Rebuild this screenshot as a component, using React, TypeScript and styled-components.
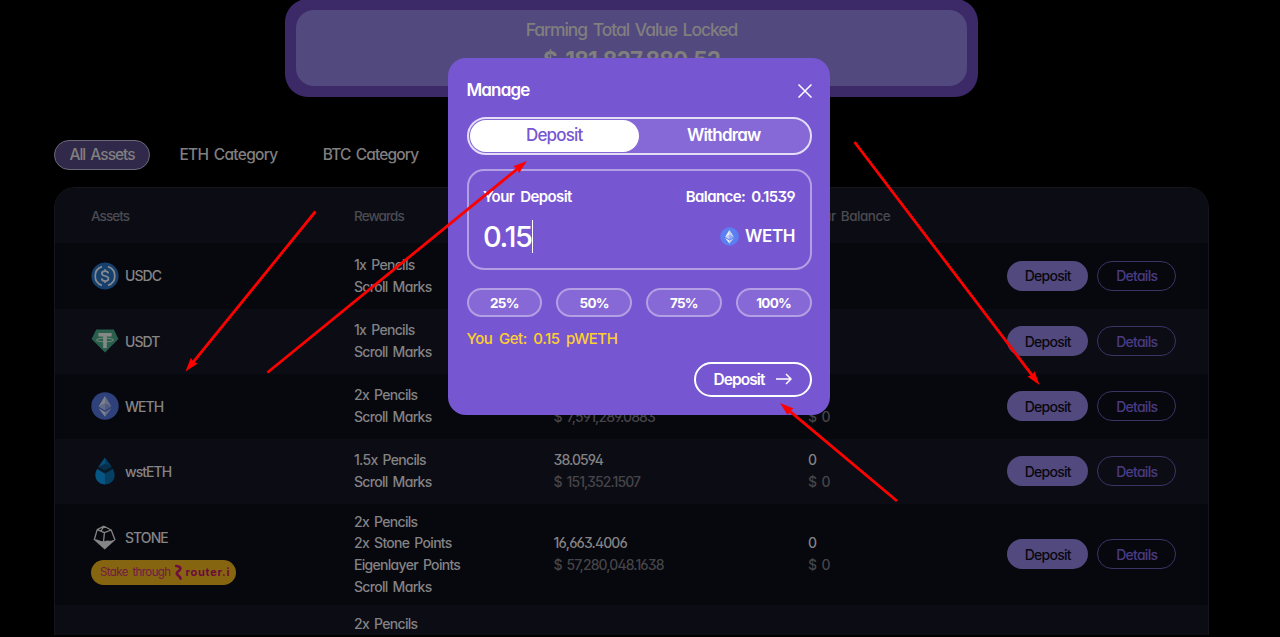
import styled, { createGlobalStyle } from "styled-components";

const GlobalStyle = createGlobalStyle`
  * {
    box-sizing: border-box;
  }
  body {
    margin: 0;
    background: #000;
    font-family: Inter, "Open Sans", sans-serif;
    font-feature-settings: "cv11", "ss01";
    font-weight: 550;
    word-spacing: 2px;
    overflow: hidden;
  }
  button {
    font: inherit;
    word-spacing: inherit;
    padding: 0;
    cursor: pointer;
  }
`;

const Page = styled.div`
  position: relative;
  height: 637px;
  overflow: hidden;
  display: flex;
  flex-direction: column;
  background: #000;
`;

const Banner = styled.section`
  flex: none;
  width: 693px;
  height: 98px;
  margin: -1px 0 0 285px;
  padding: 11px;
  border-radius: 23px;
  background: #3c2a68;
`;

const BannerInner = styled.div`
  height: 76px;
  border-radius: 18px;
  background: #52497e;
  color: #807f7e;
  text-align: center;
  padding-top: 8px;
`;

const BannerTitle = styled.div`
  font-size: 17.5px;
  line-height: 24px;
  letter-spacing: -1.05px;
`;

const BannerValue = styled.div`
  margin-top: 4px;
  font-size: 22.5px;
  line-height: 28px;
  font-weight: 650;
  letter-spacing: -0.85px;
  word-spacing: 4px;
`;

const Tabs = styled.nav`
  flex: none;
  display: flex;
  margin: 43px 0 0 54px;
  height: 30px;
`;

const Tab = styled.button<{ $active?: boolean; $width: number; $spacing: number }>`
  width: ${(p) => p.$width}px;
  height: 30px;
  border-radius: 15px;
  border: 1px solid ${(p) => (p.$active ? "#6b6878" : "transparent")};
  background: ${(p) => (p.$active ? "#302949" : "transparent")};
  color: #807f80;
  font-size: 15.5px;
  line-height: 26px;
  padding-bottom: 1px;
  letter-spacing: ${(p) => p.$spacing}px;
  white-space: nowrap;
`;

const Table = styled.section`
  flex: none;
  width: 1155px;
  height: 448px;
  margin: 17px 0 0 54px;
  border: 1px solid #15151c;
  border-bottom: 0;
  border-radius: 21px 21px 0 0;
  overflow: hidden;
  background: #0c0c15;
`;

const TableRow = styled.div<{ $height: number; $dark?: boolean }>`
  display: grid;
  grid-template-columns: 263px 199.5px 254.5px 199px 169px;
  align-items: center;
  height: ${(p) => p.$height}px;
  padding-left: 36px;
  background: ${(p) => (p.$dark ? "#07070e" : "#0c0c15")};
`;

const HeadCell = styled.div<{ $spacing: number }>`
  padding-top: 1px;
  color: #4b4b50;
  font-size: 13.5px;
  letter-spacing: ${(p) => p.$spacing}px;
`;

const Lines = styled.div<{ $spacing?: number; $lift?: number }>`
  display: flex;
  flex-direction: column;
  margin-bottom: ${(p) => p.$lift ?? 0}px;
  color: #838383;
  font-size: 14px;
  line-height: 21.8px;
  letter-spacing: ${(p) => p.$spacing ?? -0.7}px;
  white-space: nowrap;
`;

const Muted = styled.span`
  color: #454548;
`;

const Asset = styled.div`
  display: flex;
  align-items: center;
  gap: 6px;
  height: 28px;
  color: #858585;
  font-size: 14px;
  letter-spacing: -0.95px;

  svg {
    flex: none;
  }
`;

const StakeBadge = styled.div`
  display: flex;
  align-items: center;
  width: 145px;
  height: 25px;
  margin-top: 8px;
  padding-left: 9px;
  border-radius: 13px;
  background: #85650f;
  color: #741a43;
  font-size: 11.5px;
  font-weight: 400;
  letter-spacing: -0.6px;
  white-space: nowrap;

  svg {
    flex: none;
    margin: 0 2px 0 3px;
  }
`;

const Router = styled.b`
  font-size: 11px;
  font-weight: 700;
  letter-spacing: 0.75px;
  color: #6c0a3c;
`;

const Actions = styled.div`
  display: flex;
  gap: 9px;
`;

const ActionButton = styled.button<{ $filled?: boolean }>`
  width: ${(p) => (p.$filled ? 82 : 79)}px;
  height: 30px;
  border-radius: 15px;
  border: ${(p) => (p.$filled ? "0" : "1px solid #3d3365")};
  background: ${(p) => (p.$filled ? "#52497e" : "transparent")};
  color: ${(p) => (p.$filled ? "#08070f" : "#4a3b82")};
  font-size: 14px;
  font-weight: ${(p) => (p.$filled ? 450 : 550)};
  letter-spacing: -0.75px;
`;

const Modal = styled.section`
  position: absolute;
  top: 58px;
  left: 448px;
  width: 382px;
  height: 357px;
  padding: 0 18.5px 0 18.5px;
  border-radius: 18px;
  background: #7756d1;
  color: #fff;
`;

const ModalHeader = styled.header`
  display: flex;
  justify-content: space-between;
  align-items: center;
  height: 59px;
  padding-top: 6px;
`;

const ModalTitle = styled.h2`
  margin: 0 0 2px;
  font-size: 17px;
  font-weight: 600;
  letter-spacing: -0.85px;
`;

const Toggle = styled.div`
  display: flex;
  height: 38px;
  padding: 1px;
  border: 2px solid #e4ddf6;
  border-radius: 19px;
  background: #8669d6;
`;

const ToggleItem = styled.button<{ $active?: boolean }>`
  flex: 1;
  border: 0;
  border-radius: 16px;
  background: ${(p) => (p.$active ? "#fff" : "transparent")};
  color: ${(p) => (p.$active ? "#7756d1" : "#fff")};
  font-size: 17px;
  line-height: 28px;
  padding-bottom: 3px;
  font-weight: ${(p) => (p.$active ? 450 : 600)};
  letter-spacing: -0.8px;
`;

const DepositBox = styled.div`
  height: 101px;
  margin-top: 14px;
  padding: 15px 14.5px 0 14.5px;
  border: 2px solid #b39fe4;
  border-radius: 17px;
`;

const Split = styled.div<{ $height: number }>`
  display: flex;
  justify-content: space-between;
  align-items: center;
  height: ${(p) => p.$height}px;
  font-size: 15px;
  font-weight: 600;
  letter-spacing: -0.6px;
  word-spacing: 3px;
`;

const Amount = styled.div`
  height: 33px;
  border-right: 1px solid #fff;
  font-size: 29px;
  line-height: 33px;
  font-weight: 550;
  letter-spacing: -1.4px;
`;

const Token = styled.div`
  display: flex;
  align-items: center;
  gap: 6px;
  font-size: 17px;
  letter-spacing: -0.4px;
`;

const Percents = styled.div`
  display: grid;
  grid-template-columns: repeat(4, 1fr);
  gap: 14px;
  margin-top: 18px;
`;

const Percent = styled.button`
  height: 29px;
  border: 2px solid #b39fe4;
  border-radius: 15px;
  background: #8669d6;
  color: #fff;
  font-size: 13.5px;
  font-weight: 650;
  letter-spacing: -0.75px;
`;

const YouGet = styled.div`
  margin-top: 12px;
  height: 20px;
  line-height: 20px;
  font-size: 15px;
  letter-spacing: -0.45px;
  word-spacing: 3px;
  color: #ffd02d;
`;

const ModalFooter = styled.footer`
  display: flex;
  justify-content: flex-end;
  margin-top: 13px;
`;

const SubmitButton = styled.button`
  display: flex;
  align-items: center;
  justify-content: center;
  gap: 11px;
  width: 118px;
  height: 35px;
  padding-bottom: 1px;
  border: 2px solid #fff;
  border-radius: 18px;
  background: transparent;
  color: #fff;
  font-size: 15.5px;
  font-weight: 600;
  letter-spacing: -0.9px;
`;

const Arrows = styled.svg`
  position: absolute;
  inset: 0;
  pointer-events: none;
`;

const UsdcIcon = () => (
  <svg width="28" height="28" viewBox="0 0 28 28">
    <circle cx="14" cy="14" r="13.6" fill="#153f6c" />
    <g fill="none" stroke="#86898d" strokeWidth="1.7">
      <path d="M11 4.6a9.9 9.9 0 0 0 0 18.8M17 4.6a9.9 9.9 0 0 1 0 18.8" />
      <path d="M17.3 11.4c-.2-1.5-1.4-2.3-3.2-2.3-2 0-3.3.9-3.3 2.4 0 3.5 6.7 1.5 6.7 5 0 1.6-1.4 2.5-3.4 2.5s-3.4-.9-3.5-2.6M14 7.2v2M14 18.9v2.2" />
    </g>
  </svg>
);

const UsdtIcon = () => (
  <svg width="28" height="28" viewBox="0 0 28 28">
    <path d="M5.2 2.4h17.6l4.6 9.6L14 25.4.6 12z" fill="#28604d" />
    <path d="M7.4 6h13.2v3.4h-4.8V21h-3.6V9.4H7.4z" fill="#858986" />
    <ellipse cx="14" cy="13" rx="8.6" ry="1.8" fill="none" stroke="#858986" strokeWidth=".9" />
  </svg>
);

const EthIcon = ({ size, bright }: { size: number; bright?: boolean }) => (
  <svg width={size} height={size} viewBox="0 0 28 28">
    <circle cx="14" cy="14" r="13.7" fill={bright ? "#5b7ff0" : "#2f417b"} />
    <g fill={bright ? "#fff" : "#87898e"}>
      <path d="M14 4v7.6l-6.5 3z" opacity=".9" />
      <path d="M14 4l6.5 10.6-6.5-3z" opacity=".65" />
      <path d="M14 11.6v7l-6.5-4z" opacity=".6" />
      <path d="M14 11.6l6.5 3-6.5 4z" opacity=".35" />
      <path d="M14 20v4.7l-6.5-8.5z" opacity=".9" />
      <path d="M14 20l6.5-3.8-6.5 8.5z" opacity=".6" />
    </g>
  </svg>
);

const WstEthIcon = () => (
  <svg width="28" height="28" viewBox="0 0 28 28">
    <path d="M14 .5v12.9L7.300 9.800z" fill="#07507c" />
    <path d="M14 .5l6.700 9.300-6.700 3.600z" fill="#063a5d" />
    <path d="M7.300 9.800L14 6.700l6.700 3.100-6.700 3.700z" fill="#07304c" />
    <path d="M6.200 11.800L14 16.500v11C6 27.500 1.600 19.500 6.200 11.800z" fill="#075582" />
    <path d="M21.800 11.800L14 16.500v11c8 0 12.400-8 7.800-15.700z" fill="#063f62" />
    <path d="M6.200 11.800L14 16.500l7.800-4.700-.8-1.400-7 4.200-7-4.200z" fill="#07202f" />
  </svg>
);

const StoneIcon = () => (
  <svg width="28" height="28" viewBox="0 0 28 28">
    <path
      d="M13 2.200L6.200 5.600 3.200 16M13 2.200l7.200 3.800L24 16M6.200 5.600l7.200 3 6.800-2.600M13 2.200l-3 4.800M13.400 8.600L12.500 18"
      fill="none"
      stroke="#858585"
      strokeWidth="1.300"
      strokeLinejoin="round"
    />
    <path d="M2.600 15.500c3-.8 5.200 1.300 8.600 1.800 3 .4 4-1.600 6.600-.6 2.200.5 3.800-.6 6.800-.9L13.700 25.500z" fill="#858585" />
  </svg>
);

const RouterIcon = () => (
  <svg width="10" height="17" viewBox="0 0 10 17">
    <path
      d="M2.200 2c3.600.3 5.300 2.100 3.300 4.300C3.800 7.800 2.200 8.300 2.800 9.800c.8 2 3.400 2.200 3.700 4.800"
      fill="none"
      stroke="#700d40"
      strokeWidth="2.600"
      strokeLinecap="round"
    />
  </svg>
);

const assets = [
  { name: "USDC", icon: <UsdcIcon />, height: 66, rewards: ["1x Pencils", "Scroll Marks"] },
  { name: "USDT", icon: <UsdtIcon />, height: 65, rewards: ["1x Pencils", "Scroll Marks"] },
  { name: "WETH", icon: <EthIcon size={28} />, height: 65, rewards: ["2x Pencils", "Scroll Marks"], tvl: ["2,208.1503", "$ 7,591,289.0883"] },
  { name: "wstETH", icon: <WstEthIcon />, height: 65, rewards: ["1.5x Pencils", "Scroll Marks"], tvl: ["38.0594", "$ 151,352.1507"] },
  {
    name: "STONE",
    icon: <StoneIcon />,
    height: 101.5,
    rewards: ["2x Pencils", "2x Stone Points", "Eigenlayer Points", "Scroll Marks"],
    tvl: ["16,663.4006", "$ 57,280,048.1638"],
    stake: true,
  },
];

const arrows = [
  [315.5, 211.5, 185.5, 371.5],
  [267.5, 372.5, 527, 161],
  [854.5, 142, 1039.5, 385],
  [897, 501, 780, 403],
];

const Arrow = ({ points: [x1, y1, x2, y2] }: { points: number[] }) => {
  const angle = (Math.atan2(y2 - y1, x2 - x1) * 180) / Math.PI;
  const length = Math.hypot(x2 - x1, y2 - y1);
  return (
    <g transform={`translate(${x1} ${y1}) rotate(${angle})`}>
      <path d={`M0 0H${length - 8}`} stroke="#fe0000" strokeWidth="2.8" />
      <path d={`M${length} 0l-14 -4.500l1.500 4.500l-1.500 4.500z`} fill="#fe0000" />
    </g>
  );
};

export default function App() {
  return (
    <Page>
      <GlobalStyle />
      <Banner>
        <BannerInner>
          <BannerTitle>Farming Total Value Locked</BannerTitle>
          <BannerValue>$ 181,827,880.52</BannerValue>
        </BannerInner>
      </Banner>

      <Tabs>
        <Tab $active $width={96} $spacing={-1}>All Assets</Tab>
        <Tab $width={157} $spacing={-0.7}>ETH Category</Tab>
        <Tab $width={127} $spacing={-0.85}>BTC Category</Tab>
      </Tabs>

      <Table>
        <TableRow $height={54.5}>
          <HeadCell $spacing={-0.95}>Assets</HeadCell>
          <HeadCell $spacing={-0.9}>Rewards</HeadCell>
          <HeadCell $spacing={-0.5}>TVL</HeadCell>
          <HeadCell $spacing={-0.5}>Your Balance</HeadCell>
        </TableRow>
        {assets.map((asset, i) => (
          <TableRow key={asset.name} $height={asset.height} $dark={i % 2 === 0}>
            <div>
              <Asset>
                {asset.icon}
                {asset.name}
              </Asset>
              {asset.stake && (
                <StakeBadge>
                  Stake through
                  <RouterIcon />
                  <Router>router.i</Router>
                </StakeBadge>
              )}
            </div>
            <Lines>
              {asset.rewards.map((reward) => (
                <span key={reward}>{reward}</span>
              ))}
            </Lines>
            <Lines $spacing={-0.9}>
              {asset.tvl && (
                <>
                  <span>{asset.tvl[0]}</span>
                  <Muted>{asset.tvl[1]}</Muted>
                </>
              )}
            </Lines>
            <Lines $spacing={-0.6} $lift={1}>
              {asset.tvl && (
                <>
                  <span>0</span>
                  <Muted>$ 0</Muted>
                </>
              )}
            </Lines>
            <Actions>
              <ActionButton $filled>Deposit</ActionButton>
              <ActionButton>Details</ActionButton>
            </Actions>
          </TableRow>
        ))}
        <TableRow $height={38}>
          <span />
          <Lines>
            <span>2x Pencils</span>
          </Lines>
        </TableRow>
      </Table>

      <Modal>
        <ModalHeader>
          <ModalTitle>Manage</ModalTitle>
          <svg width="14" height="14" viewBox="0 0 14 14">
            <path d="M.5.5l13 13M13.5.5l-13 13" stroke="#fff" strokeWidth="1.5" />
          </svg>
        </ModalHeader>
        <Toggle>
          <ToggleItem $active>Deposit</ToggleItem>
          <ToggleItem>Withdraw</ToggleItem>
        </Toggle>
        <DepositBox>
          <Split $height={20}>
            <span>Your Deposit</span>
            <span>Balance: 0.1539</span>
          </Split>
          <Split $height={60}>
            <Amount>0.15</Amount>
            <Token>
              <EthIcon size={19} bright />
              WETH
            </Token>
          </Split>
        </DepositBox>
        <Percents>
          <Percent>25%</Percent>
          <Percent>50%</Percent>
          <Percent>75%</Percent>
          <Percent>100%</Percent>
        </Percents>
        <YouGet>You Get: 0.15 pWETH</YouGet>
        <ModalFooter>
          <SubmitButton>
            Deposit
            <svg width="16" height="12" viewBox="0 0 16 12">
              <path d="M0 6h15M10 1l5 5-5 5" fill="none" stroke="#fff" strokeWidth="1.5" />
            </svg>
          </SubmitButton>
        </ModalFooter>
      </Modal>

      <Arrows width="1280" height="637">
        {arrows.map((points) => (
          <Arrow key={points.join()} points={points} />
        ))}
      </Arrows>
    </Page>
  );
}
